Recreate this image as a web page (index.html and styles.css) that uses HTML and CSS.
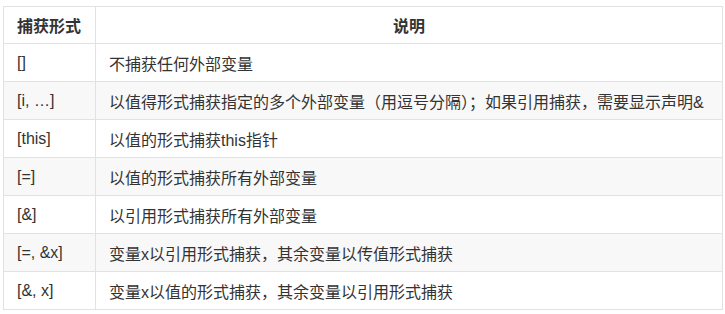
FILE: index.html
```html
<!DOCTYPE html>
<html lang="zh">
<head>
<meta charset="utf-8">
<link rel="stylesheet" href="styles.css">
</head>
<body>
<table class="capture-table">
  <thead>
    <tr><th class="col-form">捕获形式</th><th class="col-desc">说明</th></tr>
  </thead>
  <tbody>
    <tr><td>[]</td><td>不捕获任何外部变量</td></tr>
    <tr><td>[i, …]</td><td>以值得形式捕获指定的多个外部变量（用逗号分隔）；如果引用捕获，需要显示声明&amp;</td></tr>
    <tr><td>[this]</td><td>以值的形式捕获this指针</td></tr>
    <tr><td>[=]</td><td>以值的形式捕获所有外部变量</td></tr>
    <tr><td>[&amp;]</td><td>以引用形式捕获所有外部变量</td></tr>
    <tr><td>[=, &amp;x]</td><td>变量x以引用形式捕获，其余变量以传值形式捕获</td></tr>
    <tr><td>[&amp;, x]</td><td>变量x以值的形式捕获，其余变量以引用形式捕获</td></tr>
  </tbody>
</table>
</body>
</html>
```
FILE: styles.css
```css
html, body {
  margin: 0;
  padding: 0;
  background: #ffffff;
}
body {
  padding: 6px 0 0 3px;
  font-family: "Liberation Sans", "Noto Sans CJK SC", sans-serif;
  font-size: 16px;
  color: #333333;
}
.capture-table {
  border-collapse: collapse;
  width: 720px;
  table-layout: fixed;
}
.capture-table th,
.capture-table td {
  border: 1px solid #e2e2e2;
  height: 38px;
  padding: 0 13px;
  text-align: left;
  vertical-align: middle;
  white-space: nowrap;
  box-sizing: border-box;
}
.capture-table th {
  font-weight: bold;
  height: 37px;
}
.capture-table .col-form {
  width: 92px;
}
.capture-table .col-desc {
  text-align: center;
}
.capture-table tbody tr:nth-child(even) td {
  background: #f8f8f8;
}
```
